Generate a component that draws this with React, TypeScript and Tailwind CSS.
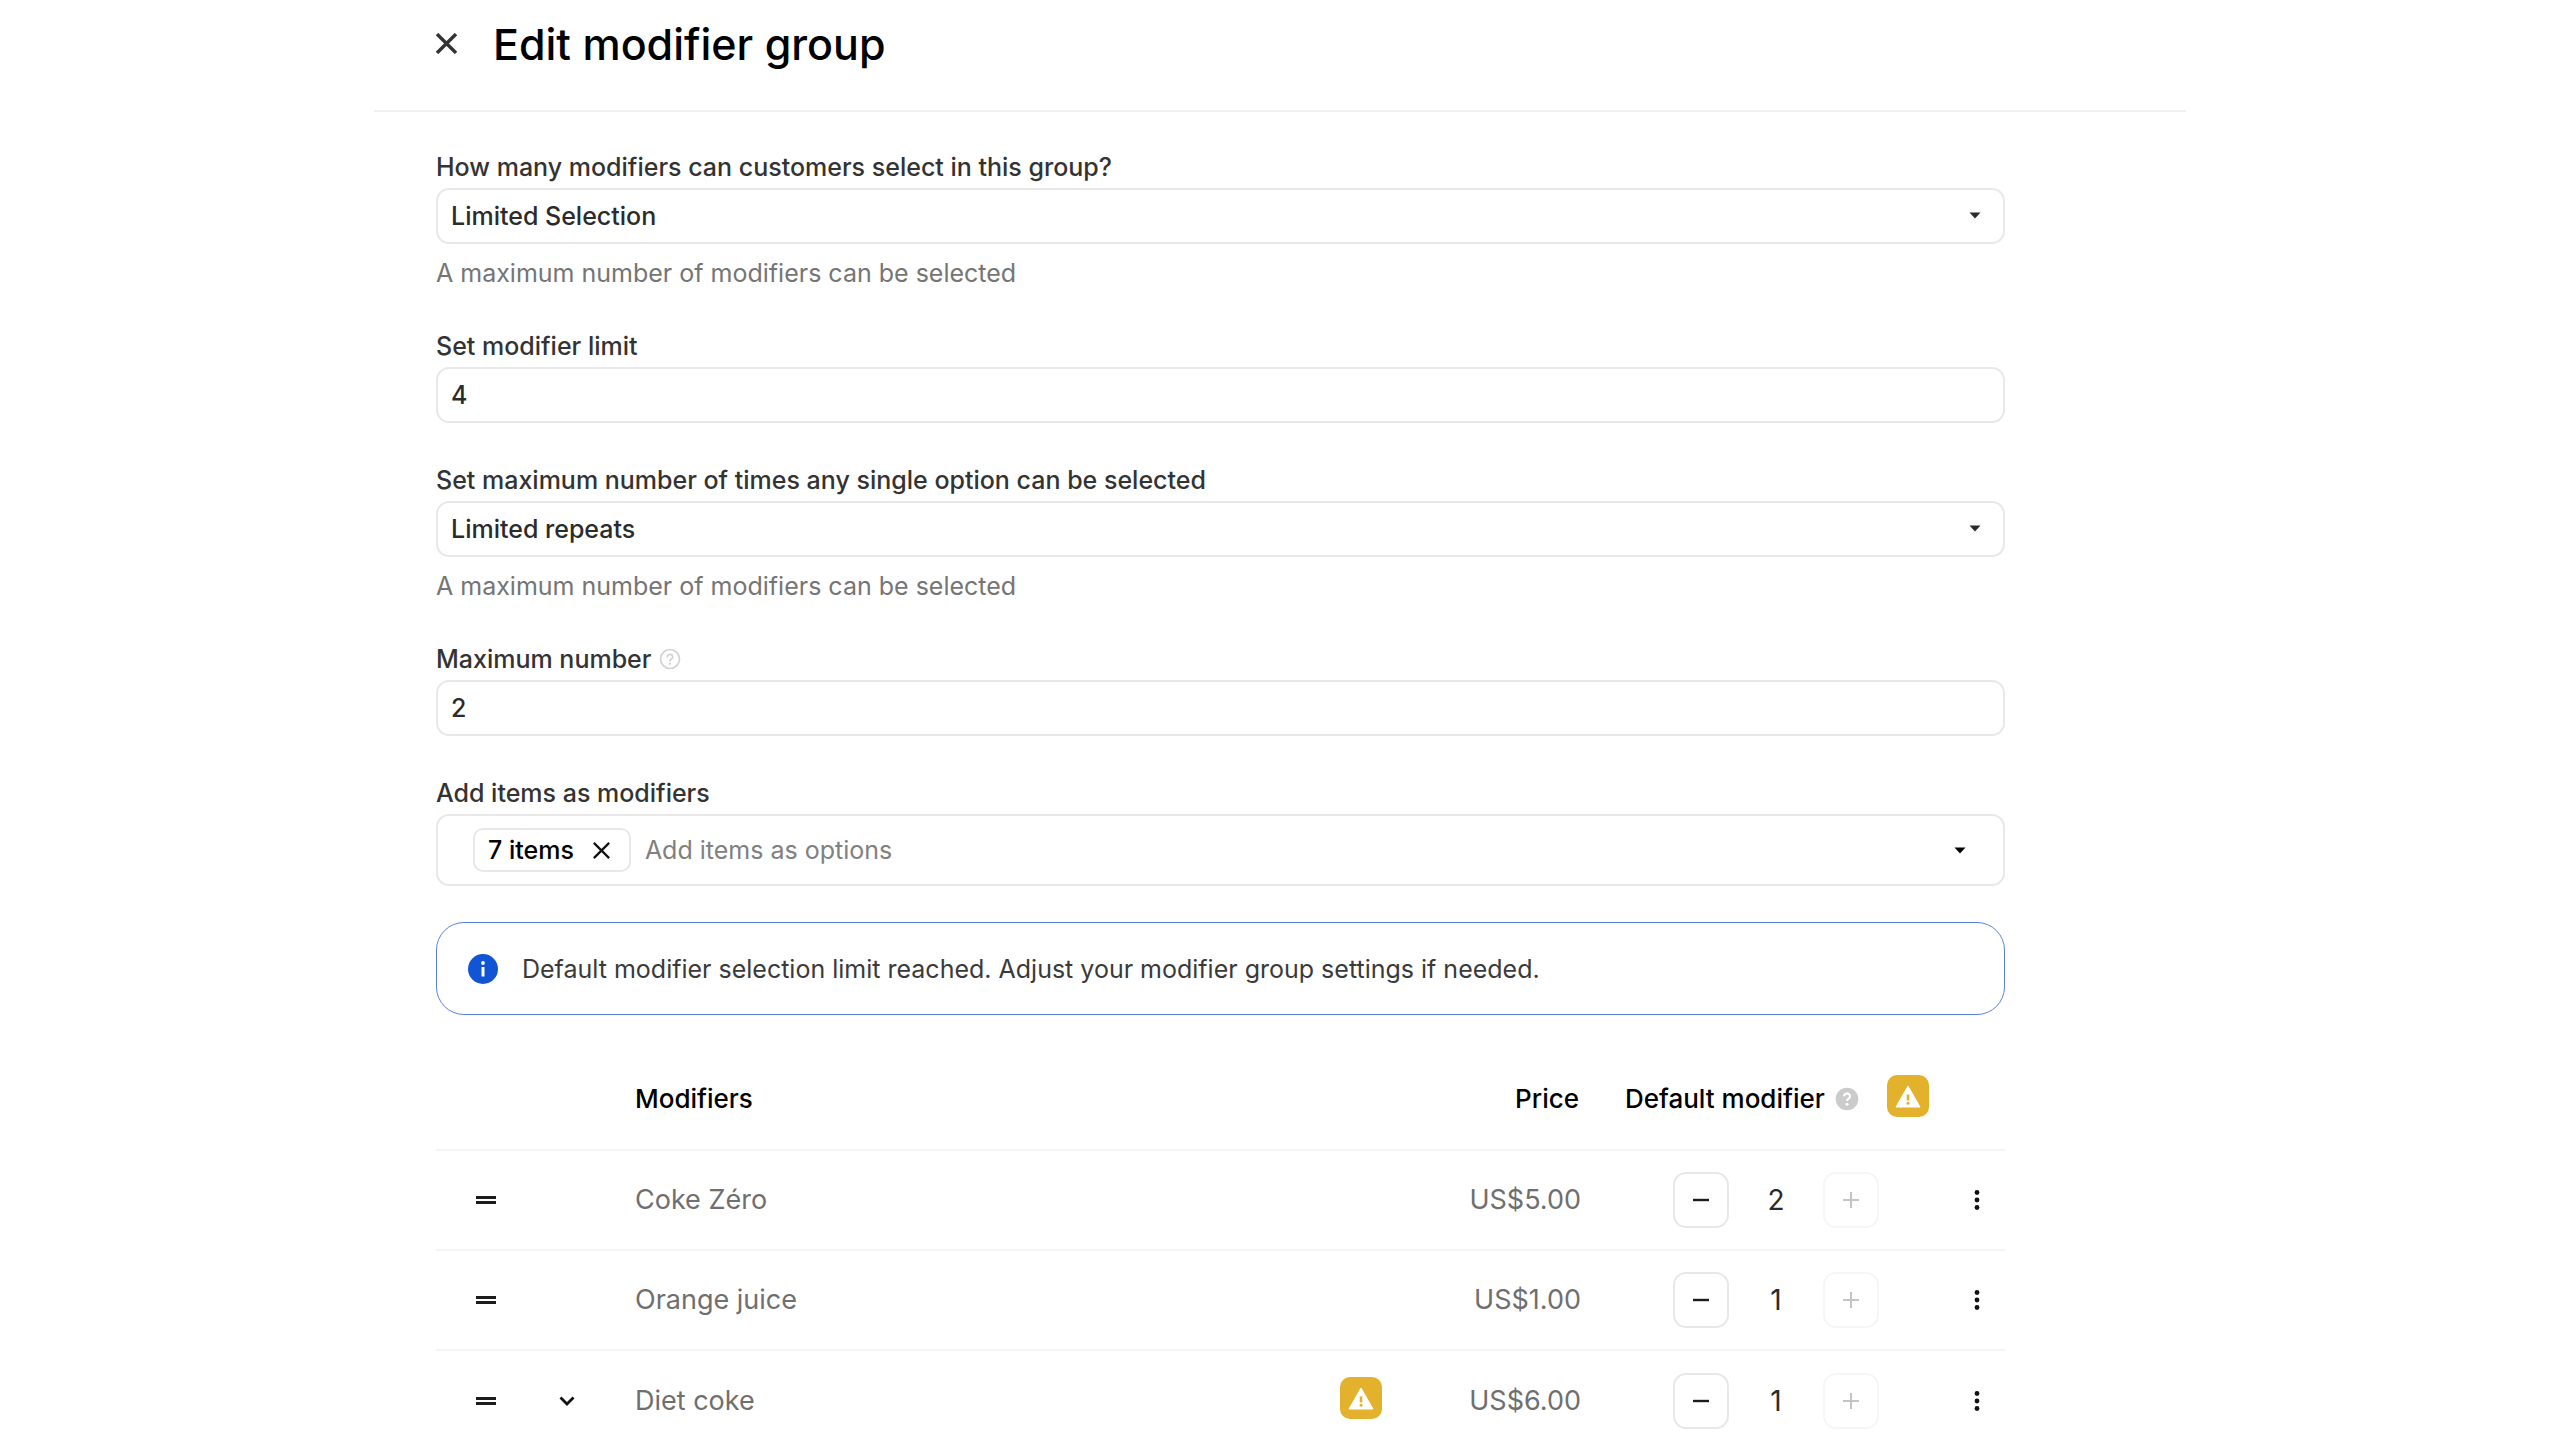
import { ReactNode, useState } from "react";

const controlBox =
  "h-14 w-full appearance-none rounded-[13px] border-2 border-[#e8e8e8] bg-white pl-[13px] pr-12 text-[25px] leading-8 font-medium text-[#2b2b2b] outline-none";

function Caret({ className }: { className: string }) {
  return (
    <svg viewBox="0 0 12 7" className={className} aria-hidden="true">
      <path d="M0.5 0.5h11L6 6.5z" fill="currentColor" />
    </svg>
  );
}

function CloseIcon({ className }: { className: string }) {
  return (
    <svg viewBox="0 0 20 20" className={className} fill="none" stroke="currentColor" aria-hidden="true">
      <path d="M1 1l18 18M19 1L1 19" />
    </svg>
  );
}

function WarningBadge() {
  return (
    <span role="img" aria-label="Warning" className="flex size-[42px] shrink-0 items-center justify-center rounded-[10px] bg-[#e3b12b]">
      <svg viewBox="0 0 26 24" className="h-6 w-[26px]">
        <path d="M13 2L25 23H1z" fill="#fff" stroke="#fff" strokeWidth="1" strokeLinejoin="round" />
        <path d="M13 10.500v6" stroke="#e3b12b" strokeWidth="2.600" />
        <circle cx="13" cy="19.300" r="1.500" fill="#e3b12b" />
      </svg>
    </span>
  );
}

function HelpOutline() {
  return (
    <svg viewBox="0 0 22 22" className="size-[22px]" fill="none" stroke="#d2d2d2" strokeWidth="1.700" aria-hidden="true">
      <circle cx="11" cy="11" r="9.500" />
      <path d="M8.300 8.800a2.700 2.500 0 1 1 4.200 2.100c-1 .7-1.500 1.100-1.500 2.200" strokeLinecap="round" />
      <circle cx="11" cy="15.800" r="1.100" fill="#d2d2d2" stroke="none" />
    </svg>
  );
}

function HelpSolid() {
  return (
    <svg viewBox="0 0 24 24" className="size-6" fill="none" aria-hidden="true">
      <circle cx="12" cy="12" r="11.300" fill="#cbcbcb" />
      <path d="M9 9.300a3 2.800 0 1 1 4.700 2.300c-1.100.8-1.700 1.200-1.700 2.500" stroke="#fff" strokeWidth="2.200" />
      <circle cx="12" cy="17.300" r="1.500" fill="#fff" />
    </svg>
  );
}

function Field({ id, label, help, hint, children }: { id: string; label: string; help?: boolean; hint?: string; children: ReactNode }) {
  return (
    <div className="flex flex-col">
      <div className="mb-[5px] flex items-center gap-2">
        <label htmlFor={id} className="text-[25px] leading-8 font-medium text-[#333]">
          {label}
        </label>
        {help && <HelpOutline />}
      </div>
      {children}
      {hint && <p className="mt-[13px] text-[25px] leading-8 text-[#757575]">{hint}</p>}
    </div>
  );
}

function Select({ id, value }: { id: string; value: string }) {
  return (
    <div className="relative">
      <select id={id} className={controlBox} defaultValue={value}>
        <option>{value}</option>
      </select>
      <Caret className="pointer-events-none absolute top-6 right-6 h-[7px] w-3 text-[#2b2b2b]" />
    </div>
  );
}

type Row = { name: string; price: string; count: number; expandable?: boolean; warning?: boolean };

const rows: Row[] = [
  { name: "Coke Zéro", price: "US$5.00", count: 2 },
  { name: "Orange juice", price: "US$1.00", count: 1 },
  { name: "Diet coke", price: "US$6.00", count: 1, expandable: true, warning: true },
];

function ModifierRow({ row }: { row: Row }) {
  return (
    <tr className="h-[100px] border-b-2 border-[#f4f4f4] text-[27px] leading-9 last:border-b-0">
      <td className="pl-10">
        <button type="button" aria-label={`Reorder ${row.name}`} className="flex">
          <svg viewBox="0 0 20 8" className="h-2 w-5" fill="#1c1c1c">
            <path d="M0 0h20v3H0zM0 5h20v3H0z" />
          </svg>
        </button>
      </td>
      <td className="pl-2">
        {row.expandable && (
          <button type="button" aria-label={`Expand ${row.name}`} className="flex">
            <svg viewBox="0 0 16 10" className="h-2.5 w-4" fill="none" stroke="#111" strokeWidth="2.800">
              <path d="M1.500 1.500L8 8l6.500-6.500" />
            </svg>
          </button>
        )}
      </td>
      <td className="text-[#6f6f6f]">{row.name}</td>
      <td className="pb-1.5">{row.warning && <WarningBadge />}</td>
      <td className="pr-2.5 text-right text-[#6f6f6f]">{row.price}</td>
      <td className="pl-[82px]">
        <div className="flex items-center">
          <button type="button" aria-label="Decrease" className="flex size-14 items-center justify-center rounded-[13px] border-2 border-[#e8e8e8]">
            <svg viewBox="0 0 18 18" className="size-[18px]" stroke="#1c1c1c" strokeWidth="2.400">
              <path d="M1 9h16" />
            </svg>
          </button>
          <span className="w-[94px] text-center text-[28px] text-[#2b2b2b]">{row.count}</span>
          <button type="button" aria-label="Increase" disabled className="flex size-14 items-center justify-center rounded-[13px] border-2 border-[#f6f6f6]">
            <svg viewBox="0 0 18 18" className="size-[18px]" stroke="#c4c4c4" strokeWidth="2">
              <path d="M1 9h16M9 1v16" />
            </svg>
          </button>
        </div>
      </td>
      <td className="pr-[22px]">
        <button type="button" aria-label={`More options for ${row.name}`} className="ml-auto flex">
          <svg viewBox="0 0 12 22" className="h-[22px] w-3" fill="#111">
            <circle cx="6" cy="3.500" r="2.400" />
            <circle cx="6" cy="11" r="2.400" />
            <circle cx="6" cy="18.500" r="2.400" />
          </svg>
        </button>
      </td>
    </tr>
  );
}

export default function App() {
  const [limit, setLimit] = useState("4");
  const [max, setMax] = useState("2");
  return (
    <div className="h-screen overflow-hidden bg-white font-['Inter',sans-serif]">
      <main className="mx-auto w-full max-w-[1812px]">
        <header className="flex h-28 items-start gap-9 border-b-2 border-[#f1f1f1] pt-4 pl-[62px]">
          <button type="button" aria-label="Close" className="mt-[17px] flex">
            <CloseIcon className="size-[21px] stroke-[3.200] text-[#333]" />
          </button>
          <h1 className="text-[43px] leading-[56px] font-medium text-black">Edit modifier group</h1>
        </header>

        <form className="pt-[39px] pr-[181px] pl-[62px]">
          <div className="flex flex-col gap-[41px]">
            <Field id="selection" label="How many modifiers can customers select in this group?" hint="A maximum number of modifiers can be selected">
              <Select id="selection" value="Limited Selection" />
            </Field>
            <Field id="limit" label="Set modifier limit">
              <input id="limit" className={controlBox} value={limit} onChange={(e) => setLimit(e.target.value)} />
            </Field>
            <Field id="repeats" label="Set maximum number of times any single option can be selected" hint="A maximum number of modifiers can be selected">
              <Select id="repeats" value="Limited repeats" />
            </Field>
            <Field id="max" label="Maximum number" help>
              <input id="max" className={controlBox} value={max} onChange={(e) => setMax(e.target.value)} />
            </Field>
            <Field id="items" label="Add items as modifiers">
              <div className="flex h-[72px] items-center rounded-[13px] border-2 border-[#e8e8e8] pr-[37px] pl-[35px]">
                <span className="flex h-11 shrink-0 items-center gap-[19px] rounded-[10px] border-2 border-[#e8e8e8] px-[13px] text-[25px] leading-8 font-medium text-black">
                  7 items
                  <button type="button" aria-label="Remove items" className="mr-1.5 flex">
                    <CloseIcon className="size-[17px] stroke-[2.600] text-[#111]" />
                  </button>
                </span>
                <input
                  id="items"
                  placeholder="Add items as options"
                  className="ml-3.5 min-w-0 flex-1 text-[25px] leading-8 text-black outline-none placeholder:text-[#808080]"
                />
                <Caret className="h-[7px] w-3 text-black" />
              </div>
            </Field>
          </div>

          <div role="status" className="mt-9 flex h-[93px] items-center gap-6 rounded-[28px] border border-[#5c7fdb] pl-[31px]">
            <svg viewBox="0 0 30 30" className="size-[30px]" aria-hidden="true">
              <circle cx="15" cy="15" r="15" fill="#1155d4" />
              <circle cx="15" cy="9" r="1.900" fill="#fff" />
              <path d="M15 13v9.500" stroke="#fff" strokeWidth="3" />
            </svg>
            <p className="text-[25px] leading-8 text-[#3a3a3a]">
              Default modifier selection limit reached. Adjust your modifier group settings if needed.
            </p>
          </div>

          <table className="mt-[33px] w-full table-fixed border-collapse">
            <colgroup>
              <col className="w-[115px]" />
              <col className="w-[84px]" />
              <col />
              <col className="w-[84px]" />
              <col className="w-[167px]" />
              <col className="w-[364px]" />
              <col className="w-[50px]" />
            </colgroup>
            <thead>
              <tr className="h-[102px] border-b-2 border-[#f4f4f4] text-left text-[26px] leading-9 text-black">
                <th aria-label="Reorder" />
                <th aria-label="Expand" />
                <th className="font-medium">Modifiers</th>
                <th aria-label="Warnings" />
                <th className="pr-3 text-right font-medium">Price</th>
                <th className="pl-[34px] font-medium">
                  <div className="flex items-center whitespace-nowrap">
                    Default modifier
                    <span className="mr-7 ml-2.5">
                      <HelpSolid />
                    </span>
                    <span className="pb-1.5">
                      <WarningBadge />
                    </span>
                  </div>
                </th>
                <th aria-label="Actions" />
              </tr>
            </thead>
            <tbody>
              {rows.map((row) => (
                <ModifierRow key={row.name} row={row} />
              ))}
            </tbody>
          </table>
        </form>
      </main>
    </div>
  );
}
